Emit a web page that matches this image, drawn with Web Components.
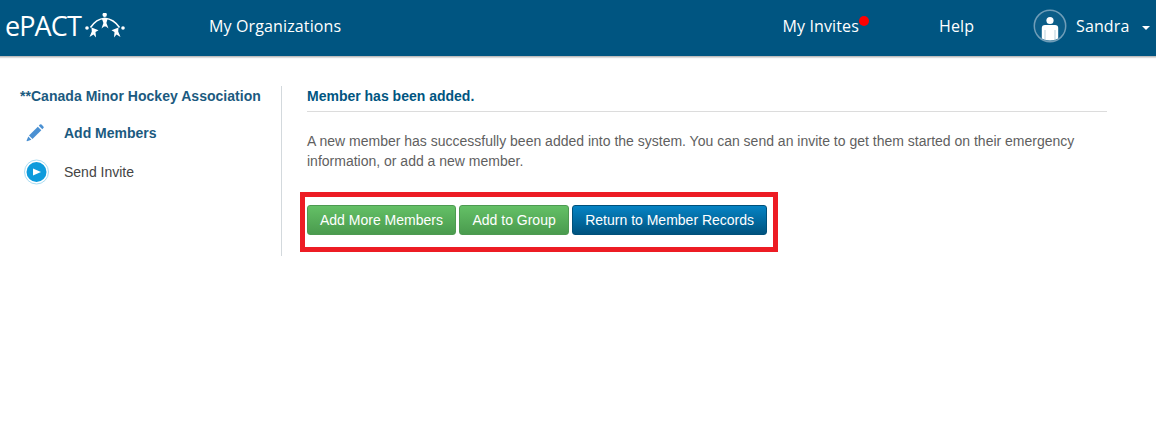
<!DOCTYPE html>
<html>
<head>
<meta charset="utf-8">
<title>ePACT</title>
<style>
  html, body { margin: 0; padding: 0; background: #fff; }
  body { width: 1156px; height: 440px; overflow: hidden; font-family: "Liberation Sans", Arial, sans-serif; }
</style>
</head>
<body>
<top-bar></top-bar>
<page-body>
  <side-menu slot="side"></side-menu>
  <member-added slot="main"></member-added>
</page-body>

<script>
class TopBar extends HTMLElement {
  constructor() {
    super();
    this.shadowDom = this.attachShadow({ mode: 'open' });
  }

  connectedCallback() {
    this.shadowDom.innerHTML = `
      <style>
        :host {
          display: flex;
          align-items: center;
          height: 52px;
          padding-bottom: 4px;
          background: #005581;
          border-bottom: 1px solid #bdbdbd;
          box-shadow: 0 1px 1px #dcdcdc;
          color: #fff;
          font-family: "Open Sans", "Noto Sans", sans-serif;
          font-size: 16px;
          letter-spacing: .13px;
        }
        .logo { display: flex; align-items: center; width: 209px; padding-left: 5px; box-sizing: border-box; letter-spacing: 0; }
        .logo b { font-weight: 400; font-size: 27px; letter-spacing: -0.9px; line-height: 52px; }
        .logo svg { margin-left: 4px; margin-top: 2px; }
        .orgs { flex: 1; }
        .invites { position: relative; margin-right: 80px; }
        .dot { position: absolute; right: -10px; top: 1px; width: 10px; height: 10px; border-radius: 50%; background: #f00; }
        .help { width: 94px; }
        .user { display: flex; align-items: center; width: 123px; }
        .user svg { margin-right: 9px; }
        .caret { margin-left: 13px; margin-top: 3px; width: 0; height: 0; border: 4px solid transparent; border-top: 4px solid #fff; border-bottom: 0; }
      </style>
      <div class="logo">
        <b>ePACT</b>
        <svg width="42" height="28" viewBox="84 10 42 28" fill="#fff">
          <path d="M89.5 24.5 Q95 16 103.7 15.2 Q113 16 118.5 24.5" fill="none" stroke="#fff" stroke-width="1.5"/>
          <circle cx="103.7" cy="11.8" r="2.2"/>
          <path d="M101 16 H106.5 L105.4 20 L107.5 25.5 L105 23.5 H103 L100.5 25.5 L102.4 20 Z"/>
          <circle cx="86" cy="25" r="1.8"/>
          <circle cx="122" cy="25" r="1.8"/>
          <path d="M90.5 24.5 L97.5 27.2 L94.5 29 L95 34.5 L92.5 31.5 L88.5 34 L90.8 28.5 Z"/>
          <path d="M117.5 24.5 L110.5 27.2 L113.5 29 L113 34.5 L115.5 31.5 L119.5 34 L117.2 28.5 Z"/>
        </svg>
      </div>
      <span class="orgs">My Organizations</span>
      <span class="invites">My Invites<i class="dot"></i></span>
      <span class="help">Help</span>
      <div class="user">
        <svg width="34" height="34" viewBox="0 0 34 34">
          <circle cx="17" cy="17" r="15.7" fill="#0b5d88" stroke="#6f9db8" stroke-width="1.5"/>
          <circle cx="17" cy="11.5" r="3.6" fill="#fff"/>
          <path d="M8.8 19 Q8.8 16 12 16 H22 Q25.2 16 25.2 19 V29.5 Q17 33.5 8.8 29.5 Z" fill="#fff"/>
          <path d="M12 21 V31 M22 21 V31" stroke="#b9cfdb" stroke-width="1"/>
        </svg>
        <span>Sandra</span>
        <i class="caret"></i>
      </div>
    `;
  }
}

class PageBody extends HTMLElement {
  constructor() {
    super();
    this.shadowDom = this.attachShadow({ mode: 'open' });
  }

  connectedCallback() {
    this.shadowDom.innerHTML = `
      <style>
        :host { display: flex; align-items: stretch; padding: 29px 49px 0 20px; }
        .side { width: 262px; box-sizing: border-box; border-right: 1px solid #d3d9dd; height: 170px; }
        .main { flex: 1; padding-left: 25px; }
      </style>
      <div class="side"><slot name="side"></slot></div>
      <div class="main"><slot name="main"></slot></div>
    `;
  }
}

class SideMenu extends HTMLElement {
  constructor() {
    super();
    this.shadowDom = this.attachShadow({ mode: 'open' });
  }

  connectedCallback() {
    this.shadowDom.innerHTML = `
      <style>
        :host { display: block; font-size: 14px; color: #444; }
        h3 { margin: 0 0 15px; font-size: 14px; line-height: 20px; font-weight: 700; color: #1b5a80; white-space: nowrap; letter-spacing: .03px; }
        .row { display: flex; align-items: center; height: 24px; margin-bottom: 15px; }
        .ico { width: 44px; display: flex; padding-left: 3px; box-sizing: border-box; }
        .on { font-weight: 700; color: #1b5a80; }
      </style>
      <h3>**Canada Minor Hockey Association</h3>
      <div class="row on">
        <span class="ico">
          <svg width="18" height="18" viewBox="2 1 18 18" fill="#4a90d2" style="margin-left:3px">
            <path d="M5 12.5 L13.8 3.7 L17.3 7.2 L8.5 16 Z"/>
            <path d="M14.8 2.7 L15.9 1.6 Q16.7 .9 17.5 1.6 L19.4 3.5 Q20.1 4.3 19.4 5.1 L18.3 6.2 Z"/>
            <path d="M4.3 13.6 L7.4 16.7 L3 18.2 Q2.4 18.2 2.6 17.6 Z"/>
          </svg>
        </span>
        Add Members
      </div>
      <div class="row">
        <span class="ico">
          <svg width="26" height="26" viewBox="0 0 26 26" style="margin-left:1px">
            <circle cx="12.5" cy="13" r="12" fill="#fff" stroke="#a9dcf2" stroke-width="1"/>
            <circle cx="12.5" cy="13" r="10" fill="#0d9bdc"/>
            <path d="M9 9.5 L17 13 L9 16.5 Z" fill="#fff"/>
          </svg>
        </span>
        Send Invite
      </div>
    `;
  }
}

class MemberAdded extends HTMLElement {
  constructor() {
    super();
    this.shadowDom = this.attachShadow({ mode: 'open' });
  }

  connectedCallback() {
    this.shadowDom.innerHTML = `
      <style>
        :host { display: block; font-size: 14px; color: #5f5f5f; }
        h4 { margin: 0 0 19px; padding-bottom: 5px; font-size: 14px; line-height: 20px; font-weight: 700; color: #005581; border-bottom: 1px solid #dcdcdc; }
        p { margin: 0 0 21px; line-height: 20px; }
        .mark { display: inline-flex; gap: 3.5px; margin-left: -7px; padding: 8px 6px 12px 2px; border: 5px solid #ed1c24; }
      </style>
      <h4>Member has been added.</h4>
      <p>A new member has successfully been added into the system. You can send an invite to get them started on their emergency information, or add a new member.</p>
      <div class="mark">
        <action-btn>Add More Members</action-btn>
        <action-btn>Add to Group</action-btn>
        <action-btn kind="blue">Return to Member Records</action-btn>
      </div>
    `;
  }
}

class ActionBtn extends HTMLElement {
  constructor() {
    super();
    this.shadowDom = this.attachShadow({ mode: 'open' });
  }

  connectedCallback() {
    this.shadowDom.innerHTML = `
      <style>
        :host { display: inline-block; }
        div {
          height: 30px;
          box-sizing: border-box;
          padding: 0 12px;
          line-height: 28px;
          border-radius: 3px;
          font-size: 14px;
          color: #fff;
          white-space: nowrap;
          background: linear-gradient(#64c066, #4a9b4e);
          border: 1px solid #4d9a51;
        }
        :host([kind="blue"]) div {
          background: linear-gradient(#0583c4, #00537f);
          border-color: #00507a;
        }
      </style>
      <div><slot></slot></div>
    `;
  }
}

customElements.define('top-bar', TopBar);
customElements.define('page-body', PageBody);
customElements.define('side-menu', SideMenu);
customElements.define('member-added', MemberAdded);
customElements.define('action-btn', ActionBtn);
</script>
</body>
</html>
